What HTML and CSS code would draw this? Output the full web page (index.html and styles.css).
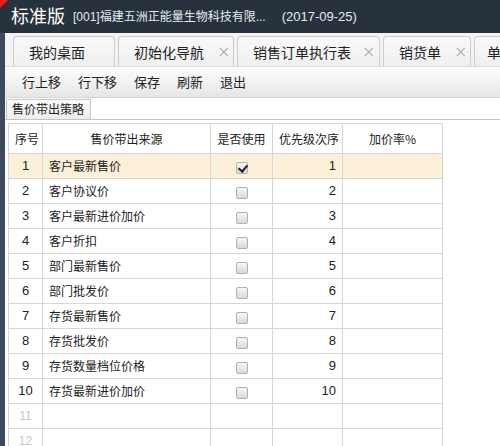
FILE: index.html
```html
<!DOCTYPE html>
<html>
<head>
<meta charset="utf-8">
<link rel="stylesheet" href="styles.css">
</head>
<body>
<div class="app">
  <header class="topbar">
    <span class="corner"></span>
    <span class="brand">标准版</span>
    <span class="company">[001]福建五洲正能量生物科技有限...</span>
    <span class="date">(2017-09-25)</span>
  </header>
  <div class="main">
    <div class="side"></div>
    <div class="content">
      <nav class="tabs">
        <div class="tab t1">我的桌面</div>
        <div class="tab t2">初始化导航<span class="x">×</span></div>
        <div class="tab t3">销售订单执行表<span class="x">×</span></div>
        <div class="tab t4">销货单<span class="x">×</span></div>
        <div class="tab t5">单</div>
      </nav>
      <div class="toolbar">
        <span>行上移</span><span>行下移</span><span>保存</span><span>刷新</span><span>退出</span>
      </div>
      <div class="subtabs"><div class="subtab">售价带出策略</div></div>
      <table class="grid">
        <colgroup><col class="c1"><col class="c2"><col class="c3"><col class="c4"><col class="c5"></colgroup>
        <thead><tr><th>序号</th><th>售价带出来源</th><th>是否使用</th><th>优先级次序</th><th>加价率%</th></tr></thead>
        <tbody>
          <tr class="sel"><td class="n">1</td><td>客户最新售价</td><td class="ck"><span class="box on"></span></td><td class="r">1</td><td></td></tr>
          <tr><td class="n">2</td><td>客户协议价</td><td class="ck"><span class="box"></span></td><td class="r">2</td><td></td></tr>
          <tr><td class="n">3</td><td>客户最新进价加价</td><td class="ck"><span class="box"></span></td><td class="r">3</td><td></td></tr>
          <tr><td class="n">4</td><td>客户折扣</td><td class="ck"><span class="box"></span></td><td class="r">4</td><td></td></tr>
          <tr><td class="n">5</td><td>部门最新售价</td><td class="ck"><span class="box"></span></td><td class="r">5</td><td></td></tr>
          <tr><td class="n">6</td><td>部门批发价</td><td class="ck"><span class="box"></span></td><td class="r">6</td><td></td></tr>
          <tr><td class="n">7</td><td>存货最新售价</td><td class="ck"><span class="box"></span></td><td class="r">7</td><td></td></tr>
          <tr><td class="n">8</td><td>存货批发价</td><td class="ck"><span class="box"></span></td><td class="r">8</td><td></td></tr>
          <tr><td class="n">9</td><td>存货数量档位价格</td><td class="ck"><span class="box"></span></td><td class="r">9</td><td></td></tr>
          <tr><td class="n">10</td><td>存货最新进价加价</td><td class="ck"><span class="box"></span></td><td class="r">10</td><td></td></tr>
          <tr class="empty"><td class="n">11</td><td></td><td></td><td></td><td></td></tr>
          <tr class="empty"><td class="n">12</td><td></td><td></td><td></td><td></td></tr>
        </tbody>
      </table>
    </div>
  </div>
</div>
</body>
</html>
```
FILE: styles.css
```css
* { box-sizing: border-box; }
html, body { margin: 0; padding: 0; }
body {
  width: 500px; height: 446px; overflow: hidden;
  font-family: "Liberation Sans", "Noto Sans CJK SC", sans-serif;
  font-size: 12px; color: #222; background: #fff;
}
.app { display: flex; flex-direction: column; height: 446px; }
.topbar {
  position: relative; flex: none;
  height: 33px; background: #28323c; color: #fff;
  display: flex; align-items: center;
  padding-left: 11px;
}
.corner {
  position: absolute; left: 0; top: 0;
  width: 0; height: 0;
  border-top: 8px solid #e8201c; border-right: 8px solid transparent;
}
.brand { font-family: "Noto Sans CJK SC", sans-serif; font-size: 18px; line-height: 22px; margin-right: 8px; margin-top: -3px; }
.company { font-size: 12px; color: #e6eaee; line-height: 16px; }
.date { font-size: 13px; color: #e6eaee; margin-left: 16px; line-height: 16px; }
.main { flex: 1; display: flex; min-height: 0; }
.side { width: 5px; flex: none; background: #3d4a59; }
.content { flex: 1; min-width: 0; display: flex; flex-direction: column; }
.tabs {
  height: 34px; flex: none; background: #f3f3f3;
  display: flex; align-items: flex-end; gap: 3px;
  padding-left: 8px; overflow: hidden;
  border-bottom: 1px solid #dcdcdc;
}
.tab {
  height: 30px; flex: none;
  border: 1px solid #cdcdcd; border-bottom: none;
  border-radius: 4px 4px 0 0;
  background: linear-gradient(#f9f9f9, #efefef);
  font-family: "Noto Sans CJK SC", sans-serif;
  font-size: 14px; line-height: 18px; color: #222;
  display: flex; align-items: center;
  padding-left: 15px;
}
.t1 { width: 102px; }
.t2 { width: 116px; }
.t3 { width: 143px; }
.t4 { width: 88px; }
.t5 { width: 40px; padding-left: 12px; }
.x { color: #9a9a9a; font-size: 16px; margin-left: 13px; font-family: "DejaVu Sans", sans-serif; font-weight: 300; }
.t3 .x { margin-left: 11px; }
.toolbar {
  height: 31px; flex: none;
  background: linear-gradient(#fdfdfd, #e6e6e6);
  border-bottom: 1px solid #d4d4d4;
  display: flex; align-items: center;
  padding-left: 17px;
  font-family: "Noto Sans CJK SC", sans-serif; font-size: 13px; line-height: 16px;
}
.toolbar span { margin-right: 17px; }
.subtabs {
  height: 21px; flex: none; margin-top: 1px;
  border-bottom: 1px solid #c4c4c4;
  display: flex; align-items: flex-end;
}
.subtab {
  height: 20px; width: 85px; margin-left: 1px;
  border: 1px solid #c4c4c4; border-bottom: none;
  background: linear-gradient(#fbfbfb, #ededed);
  font-family: "Noto Sans CJK SC", sans-serif;
  font-size: 12px; padding-left: 5px; line-height: 18px;
}
.grid {
  margin-top: 3px; margin-left: 3px;
  border-collapse: collapse; table-layout: fixed;
  width: 434px;
}
.c1 { width: 34px; } .c2 { width: 168px; } .c3 { width: 62px; } .c4 { width: 70px; } .c5 { width: 100px; }
.grid th, .grid td {
  border: 1px solid #d6d6d6; padding: 0 6px;
  font-weight: normal; font-size: 12px; line-height: 16px;
  font-family: "Noto Sans CJK SC", sans-serif;
  white-space: nowrap; overflow: hidden; color: #222;
}
.grid th { height: 30px; text-align: center; }
.grid td { height: 25px; }
.grid td.n { text-align: center; font-family: "Liberation Sans", sans-serif; font-size: 13px; padding: 0; }
.grid td.r { text-align: right; font-family: "Liberation Sans", sans-serif; font-size: 13px; padding-right: 6px; }
.grid td.ck { text-align: center; padding: 0; }
.grid tr.sel td { background: #fdf0d9; }
.grid tr.empty td.n { color: #c6c6c6; font-size: 12px; }
.box {
  display: inline-block; width: 12px; height: 12px; vertical-align: middle;
  border: 1px solid #b0b0b0; border-radius: 2px;
  background: linear-gradient(#f6f6f6, #d9d9d9);
  position: relative;
}
.box.on::after {
  content: ""; position: absolute; left: 3px; top: 0px;
  width: 4px; height: 7px;
  border: solid #222; border-width: 0 2px 2px 0;
  transform: rotate(40deg);
}
```
